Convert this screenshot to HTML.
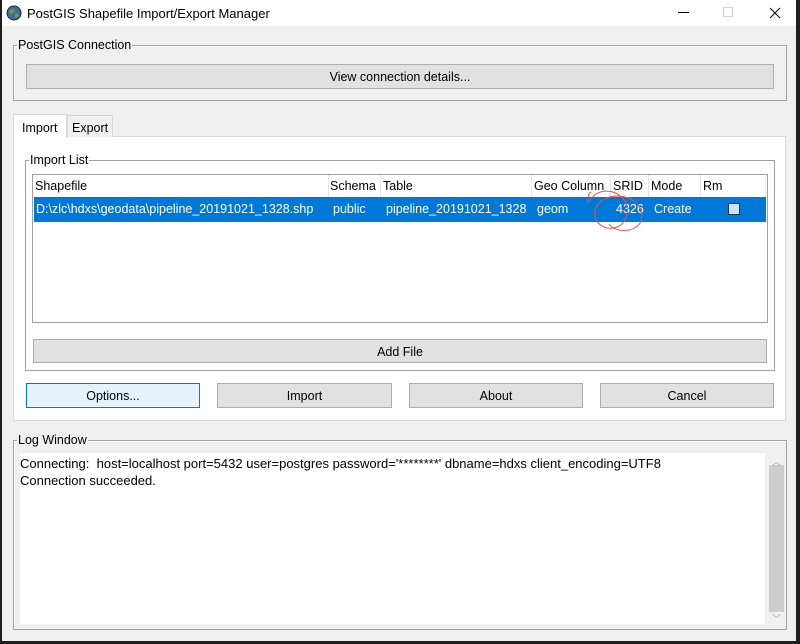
<!DOCTYPE html>
<html><head><style>
*{box-sizing:border-box;margin:0;padding:0}
body{width:800px;height:644px;background:#1e1e1e;position:relative;overflow:hidden;font-family:"Liberation Sans","Noto Sans CJK SC",sans-serif;font-size:12.5px;color:#000}
.a{position:absolute}
.win{left:2px;top:0;width:794px;height:641px;background:#f0f0f0}
.title{left:0;top:0;width:794px;height:26px;background:#fff}
.grp{border:1px solid #a0a0a0;box-shadow:1px 1px 0 #fff inset}
.lbl{background:#f0f0f0;padding:0 1px;line-height:14px}
.btn{border:1px solid #adadad;background:#e1e1e1;text-align:center;line-height:24px}
.cell{top:1px;line-height:20px;white-space:nowrap}
</style></head><body>
<div class="a win">
 <div class="a title">
  <svg class="a" style="left:4px;top:5px" width="16" height="16" viewBox="0 0 16 16"><circle cx="8" cy="8" r="7" fill="#3d6d9a"/><path d="M3 6 Q6 3 9 5 Q8 8 5 9 Z M9 9 Q12 8 13 11 Q11 13 9 12Z" fill="#6fa04d"/><circle cx="8" cy="8" r="7" fill="none" stroke="#223" stroke-width="1"/></svg>
  <div class="a" style="left:25px;top:6px;font-size:13px">PostGIS Shapefile Import/Export Manager</div>
  <div class="a" style="left:676px;top:12px;width:11px;height:1px;background:#000"></div>
  <div class="a" style="left:721px;top:7px;width:10px;height:10px;border:1px solid #ccc"></div>
  <svg class="a" style="left:767px;top:7px" width="12" height="12"><path d="M1 1L11 11M11 1L1 11" stroke="#000" stroke-width="1"/></svg>
 </div>
 <div class="a grp" style="left:11px;top:45px;width:774px;height:56px"></div>
 <div class="a lbl" style="left:15px;top:38px">PostGIS Connection</div>
 <div class="a btn" style="left:24px;top:64px;width:748px;height:25px">View connection details...</div>

 <div class="a" style="left:11px;top:136px;width:773px;height:285px;background:#fff;border:1px solid #d9d9d9"></div>
 <div class="a" style="left:11px;top:114px;width:54px;height:24px;background:#fff;border:1px solid #d9d9d9;border-bottom:none;padding:6px 0 0 8px">Import</div>
 <div class="a" style="left:65px;top:115px;width:46px;height:22px;background:#f0f0f0;border:1px solid #d9d9d9;border-bottom:none;padding:5px 0 0 4px">Export</div>

 <div class="a grp" style="left:23px;top:160px;width:750px;height:211px;background:#fff"></div>
 <div class="a lbl" style="left:27px;top:153px;background:#fff">Import List</div>
 <div class="a" style="left:30px;top:174px;width:736px;height:149px;background:#fff;border:1px solid #a0a0a0">
  <div class="a" style="left:0;top:0;width:734px;height:22px">
   <div class="a cell" style="left:2px">Shapefile</div>
   <div class="a" style="left:295px;top:0;width:1px;height:22px;background:#e5e5e5"></div>
   <div class="a cell" style="left:297px">Schema</div>
   <div class="a" style="left:347px;top:0;width:1px;height:22px;background:#e5e5e5"></div>
   <div class="a cell" style="left:350px">Table</div>
   <div class="a" style="left:498px;top:0;width:1px;height:22px;background:#e5e5e5"></div>
   <div class="a cell" style="left:501px">Geo Column</div>
   <div class="a" style="left:577px;top:0;width:1px;height:22px;background:#e5e5e5"></div>
   <div class="a cell" style="left:580px">SRID</div>
   <div class="a" style="left:615px;top:0;width:1px;height:22px;background:#e5e5e5"></div>
   <div class="a cell" style="left:618px">Mode</div>
   <div class="a" style="left:667px;top:0;width:1px;height:22px;background:#e5e5e5"></div>
   <div class="a cell" style="left:670px">Rm</div>
   <div class="a" style="left:732px;top:0;width:1px;height:22px;background:#e5e5e5"></div>
  </div>
  <div class="a" style="left:1px;top:22px;width:732px;height:25px;background:#0078d7;color:#fff">
   <div class="a cell" style="left:2px;top:2px">D:\zlc\hdxs\geodata\pipeline_20191021_1328.shp</div>
   <div class="a cell" style="left:299px;top:2px">public</div>
   <div class="a cell" style="left:352px;top:2px">pipeline_20191021_1328</div>
   <div class="a cell" style="left:503px;top:2px">geom</div>
   <div class="a cell" style="left:582px;top:2px">4326</div>
   <div class="a cell" style="left:620px;top:2px">Create</div>
   <div class="a" style="left:694px;top:6px;width:12px;height:12px;background:#cce4f7;border:1px solid #333"></div>
  </div>
 </div>
 <div class="a btn" style="left:31px;top:339px;width:734px;height:24px">Add File</div>

 <div class="a btn" style="left:24px;top:383px;width:174px;height:25px;background:#e5f1fb;border-color:#0078d7">Options...</div>
 <div class="a btn" style="left:215px;top:383px;width:175px;height:25px">Import</div>
 <div class="a btn" style="left:407px;top:383px;width:174px;height:25px">About</div>
 <div class="a btn" style="left:598px;top:383px;width:174px;height:25px">Cancel</div>

 <div class="a grp" style="left:11px;top:440px;width:774px;height:190px"></div>
 <div class="a lbl" style="left:15px;top:433px">Log Window</div>
 <div class="a" style="left:18px;top:453px;width:745px;height:171px;background:#fff;padding:2px 0 0 0;line-height:17px;white-space:pre;font-size:13px">Connecting:  host=localhost port=5432 user=postgres password='********' dbname=hdxs client_encoding=UTF8
Connection succeeded.</div>
 <div class="a" style="left:766px;top:453px;width:17px;height:171px;background:#f0f0f0"></div>
 <div class="a" style="left:767px;top:465px;width:15px;height:147px;background:#cdcdcd"></div>
 <div class="a" style="left:770px;top:455px;font-size:9px;color:#aaa">︿</div>
 <div class="a" style="left:770px;top:612px;font-size:9px;color:#aaa">﹀</div>
</div>
<svg class="a" style="left:585px;top:188px" width="65" height="50"><path d="M3 16 Q2 6 6 4 M4 14 Q12 0 28 4 Q44 10 42 26 Q38 42 22 40 Q8 36 10 22 Q14 10 30 8 Q50 8 56 22 Q60 38 44 42 Q30 44 24 36" fill="none" stroke="#e85050" stroke-width="1"/></svg>
</body></html>
